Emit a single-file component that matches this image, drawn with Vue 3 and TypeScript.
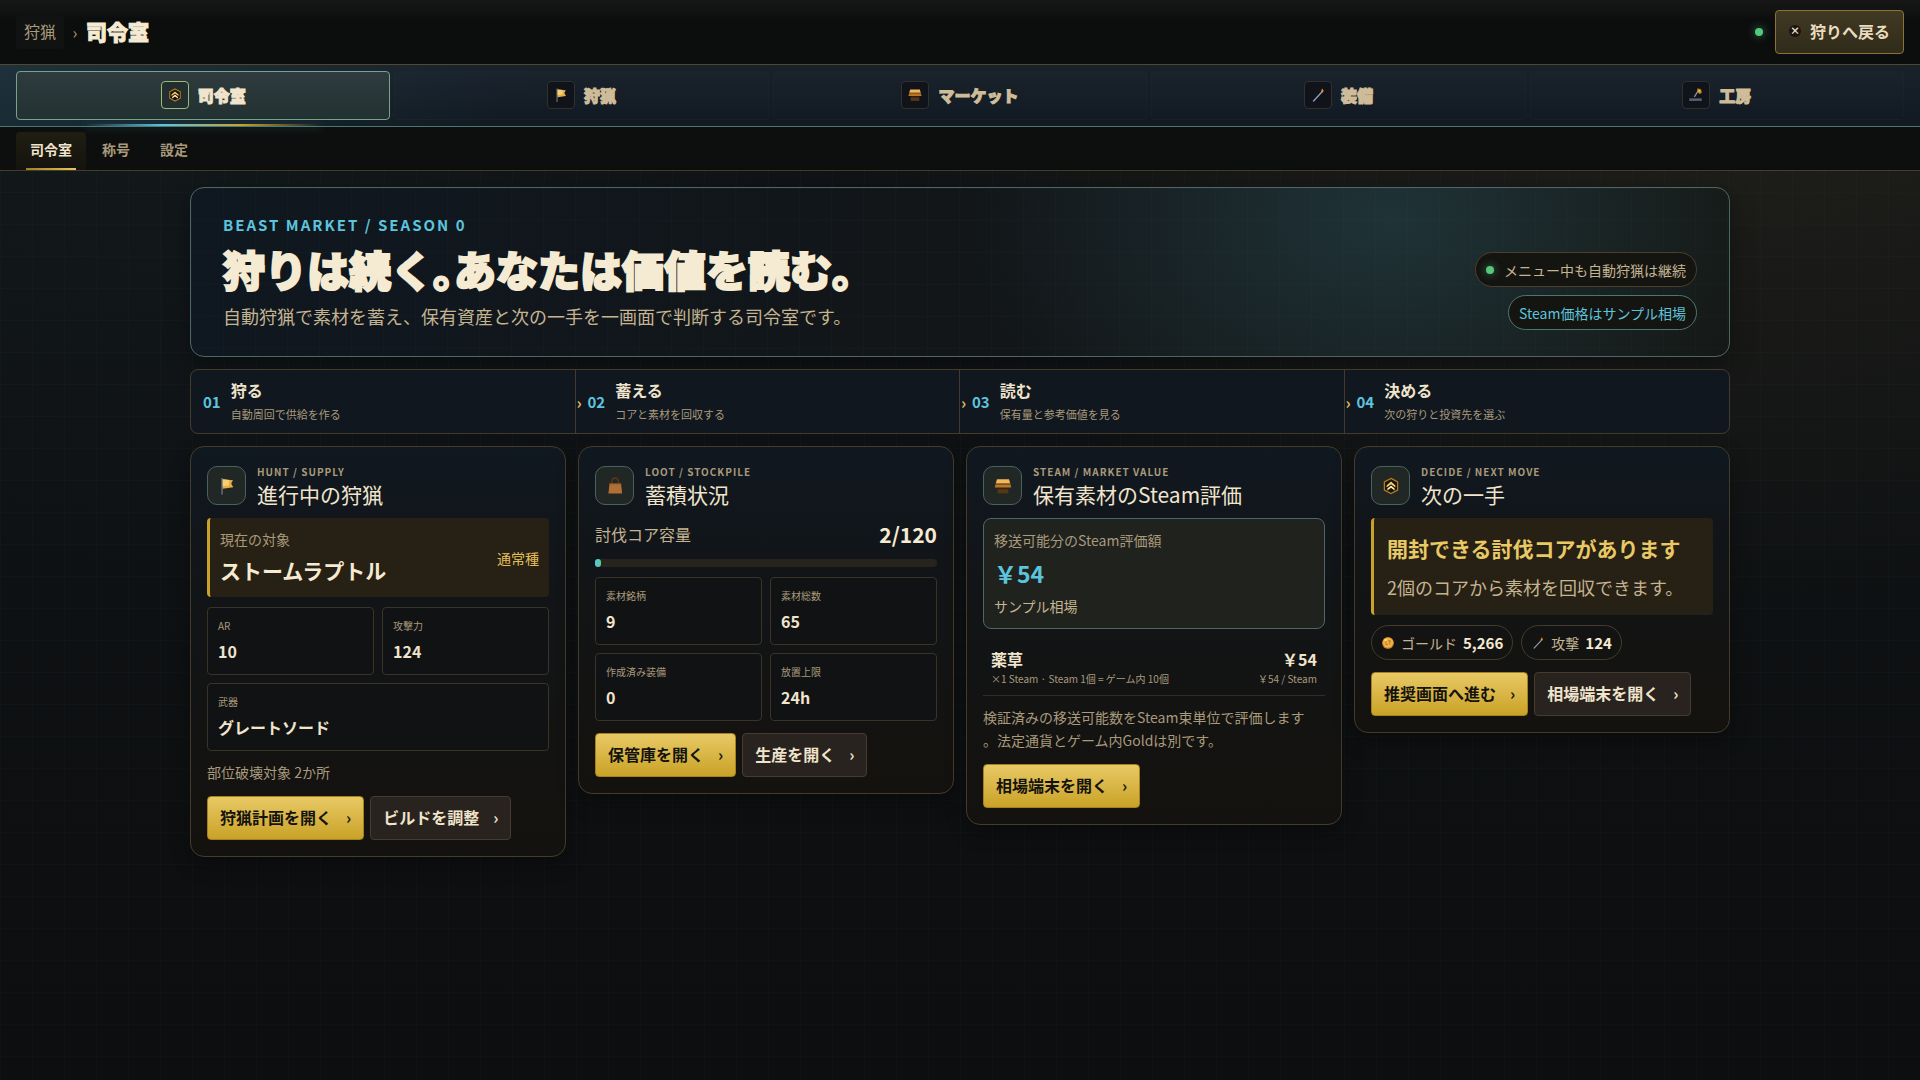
<script setup lang="ts">
import { computed, defineComponent, h, ref } from 'vue'

type IconName = 'emblem' | 'flag' | 'stall' | 'sword' | 'forge' | 'bag' | 'coin'

interface Tab {
  icon: IconName
  label: string
}

interface Stat {
  label: string
  value: string
  wide?: boolean
}

const shapes: Record<IconName, [string, Record<string, string>][]> = {
  emblem: [
    ['path', { d: 'M10 2.4 16.6 6v8L10 17.6 3.4 14V6z', fill: '#17140f', stroke: '#b9781f', 'stroke-width': '1.3' }],
    ['path', { d: 'M10 5.6 14.4 9.4v2L10 8.2l-4.4 3.2v-2z', fill: '#f3d36a' }],
    ['path', { d: 'M10 9.4l3.6 3v2L10 11.8l-3.6 2.6v-2z', fill: '#fff1b0' }],
  ],
  flag: [
    ['path', { d: 'M4.4 2h1.3v16.6H4.4z', fill: '#6f7a8a' }],
    ['path', { d: 'M5.7 3.2 16 4.2l-1.8 3.4 2 3.6-10.5 1.6z', fill: '#e6ad48' }],
    ['path', { d: 'M5.7 3.2 12 3.9v5.3l-6.3 1z', fill: '#f6cf72' }],
  ],
  stall: [
    ['path', { d: 'M4 3.2h12l1.2 4H2.8z', fill: '#f0b95c' }],
    ['path', { d: 'M2.8 7.2h14.4l1 4.2H1.8z', fill: '#b87828' }],
    ['path', { d: 'M2.6 8.4h14.8', stroke: '#6f4218', 'stroke-width': '.8' }],
    ['path', { d: 'M4.6 12.2h10.8v5.2H4.6z', fill: '#573614' }],
    ['path', { d: 'M4.6 12.2h10.8v1H4.6z', fill: '#35200c' }],
  ],
  sword: [
    ['path', { d: 'M4.4 17.4 14.8 6.2', stroke: '#8fa0bd', 'stroke-width': '1.7', 'stroke-linecap': 'round' }],
    ['path', { d: 'M15.2 1.8l2 2.8-1.6 2.6-2-1.6z', fill: '#e48b1c' }],
  ],
  forge: [
    ['path', { d: 'M8 12.4 12.8 4.6', stroke: '#8793a8', 'stroke-width': '1.6' }],
    ['path', { d: 'M12 1.6l4.4 1.6 .8 4-2.6 1.6-3.4-3z', fill: '#c98a1e' }],
    ['path', { d: 'M13.4 3.4l2 1-.6 2-2-1z', fill: '#f5c64c' }],
    ['path', { d: 'M1.6 14.2h15.6v3.2H1.6z', fill: '#566173' }],
  ],
  bag: [
    ['path', { d: 'M7 7.4V5.2a3.2 3.2 0 0 1 6.4 0v2.2', fill: 'none', stroke: '#5d3818', 'stroke-width': '1.4' }],
    ['path', { d: 'M4.6 7h11.4l1.2 10.6H3.4z', fill: '#b06f34' }],
    ['path', { d: 'M4.6 7h11.4l.2 1.2H4.4z', fill: '#7a4a20' }],
  ],
  coin: [
    ['circle', { cx: '10', cy: '10', r: '8.6', fill: '#b9711a' }],
    ['circle', { cx: '10', cy: '9.4', r: '7.4', fill: '#f0b247' }],
    ['path', { d: 'M7 6.6v5.6h3M12.6 6.6v5.6M10 7h4', fill: 'none', stroke: '#a86c1c', 'stroke-width': '1.1' }],
    ['circle', { cx: '6.6', cy: '5.8', r: '1.6', fill: '#ffe39a' }],
  ],
}

const GameIcon = defineComponent({
  props: { name: { type: String as () => IconName, required: true } },
  setup: (props) => () =>
    h('svg', { viewBox: '0 0 20 20', 'aria-hidden': 'true' }, shapes[props.name].map(([tag, attrs]) => h(tag, attrs))),
})

const tabs: Tab[] = [
  { icon: 'emblem', label: '司令室' },
  { icon: 'flag', label: '狩猟' },
  { icon: 'stall', label: 'マーケット' },
  { icon: 'sword', label: '装備' },
  { icon: 'forge', label: '工房' },
]
const activeTab = ref('司令室')

const subTabs = ['司令室', '称号', '設定']
const activeSub = ref('司令室')

const steps = [
  { no: '01', title: '狩る', text: '自動周回で供給を作る' },
  { no: '02', title: '蓄える', text: 'コアと素材を回収する' },
  { no: '03', title: '読む', text: '保有量と参考価値を見る' },
  { no: '04', title: '決める', text: '次の狩りと投資先を選ぶ' },
]

const huntStats: Stat[] = [
  { label: 'AR', value: '10' },
  { label: '攻撃力', value: '124' },
  { label: '武器', value: 'グレートソード', wide: true },
]
const lootStats: Stat[] = [
  { label: '素材銘柄', value: '9' },
  { label: '素材総数', value: '65' },
  { label: '作成済み装備', value: '0' },
  { label: '放置上限', value: '24h' },
]

const cores = ref(2)
const coreCapacity = 120
const coreWidth = computed(() => `${(cores.value / coreCapacity) * 100}%`)
</script>

<template>
  <div class="page">
    <header class="topbar">
      <div class="crumbs">
        <button type="button" class="crumb">狩猟</button>
        <span class="sep">›</span>
        <span class="here">司令室</span>
      </div>
      <div class="top-right">
        <span class="dot"></span>
        <button type="button" class="back"><span class="x">×</span>狩りへ戻る</button>
      </div>
    </header>

    <nav class="tabs">
      <button
        v-for="t in tabs"
        :key="t.label"
        type="button"
        class="tab"
        :class="{ active: t.label === activeTab }"
        @click="activeTab = t.label"
      >
        <span class="tab-icon"><GameIcon :name="t.icon" /></span>{{ t.label }}
      </button>
    </nav>

    <nav class="subtabs">
      <button
        v-for="s in subTabs"
        :key="s"
        type="button"
        class="subtab"
        :class="{ active: s === activeSub }"
        @click="activeSub = s"
      >{{ s }}</button>
    </nav>

    <main class="content">
      <section class="hero">
        <div>
          <p class="hero-eyebrow">BEAST MARKET / SEASON 0</p>
          <h1>狩りは続く。あなたは価値を読む。</h1>
          <p class="hero-text">自動狩猟で素材を蓄え、保有資産と次の一手を一画面で判断する司令室です。</p>
        </div>
        <div class="hero-pills">
          <span class="hero-pill"><i class="dot"></i>メニュー中も自動狩猟は継続</span>
          <span class="hero-pill steam">Steam価格はサンプル相場</span>
        </div>
      </section>

      <ol class="steps">
        <li v-for="s in steps" :key="s.no" class="step">
          <span class="step-no">{{ s.no }}</span>
          <div>
            <strong>{{ s.title }}</strong>
            <small>{{ s.text }}</small>
          </div>
        </li>
      </ol>

      <div class="cards">
        <article class="card">
          <header class="card-head">
            <span class="card-icon"><GameIcon name="flag" /></span>
            <div>
              <p class="eyebrow">HUNT / SUPPLY</p>
              <h2>進行中の狩猟</h2>
            </div>
          </header>
          <div class="target">
            <div>
              <span class="label">現在の対象</span>
              <strong>ストームラプトル</strong>
            </div>
            <span class="kind">通常種</span>
          </div>
          <dl class="stats">
            <div v-for="s in huntStats" :key="s.label" class="stat" :class="{ wide: s.wide }">
              <dt>{{ s.label }}</dt>
              <dd>{{ s.value }}</dd>
            </div>
          </dl>
          <p class="note">部位破壊対象 2か所</p>
          <div class="actions">
            <button type="button" class="btn primary">狩猟計画を開く<span>›</span></button>
            <button type="button" class="btn">ビルドを調整<span>›</span></button>
          </div>
        </article>

        <article class="card">
          <header class="card-head">
            <span class="card-icon"><GameIcon name="bag" /></span>
            <div>
              <p class="eyebrow">LOOT / STOCKPILE</p>
              <h2>蓄積状況</h2>
            </div>
          </header>
          <div class="capacity">
            <div class="capacity-row">
              <span>討伐コア容量</span>
              <strong>{{ cores }}/{{ coreCapacity }}</strong>
            </div>
            <div class="bar" role="progressbar" :aria-valuenow="cores" aria-valuemin="0" :aria-valuemax="coreCapacity">
              <div class="bar-fill" :style="{ width: coreWidth }"></div>
            </div>
          </div>
          <dl class="stats">
            <div v-for="s in lootStats" :key="s.label" class="stat">
              <dt>{{ s.label }}</dt>
              <dd>{{ s.value }}</dd>
            </div>
          </dl>
          <div class="actions">
            <button type="button" class="btn primary">保管庫を開く<span>›</span></button>
            <button type="button" class="btn">生産を開く<span>›</span></button>
          </div>
        </article>

        <article class="card">
          <header class="card-head">
            <span class="card-icon"><GameIcon name="stall" /></span>
            <div>
              <p class="eyebrow">STEAM / MARKET VALUE</p>
              <h2>保有素材のSteam評価</h2>
            </div>
          </header>
          <div class="valuation">
            <span class="label">移送可能分のSteam評価額</span>
            <strong>￥54</strong>
            <span class="source">サンプル相場</span>
          </div>
          <div class="holding">
            <div>
              <strong>薬草</strong>
              <small>×1 Steam · Steam 1個 = ゲーム内 10個</small>
            </div>
            <div class="holding-value">
              <strong>￥54</strong>
              <small>￥54 / Steam</small>
            </div>
          </div>
          <p class="note">検証済みの移送可能数をSteam束単位で評価します<br />。法定通貨とゲーム内Goldは別です。</p>
          <div class="actions">
            <button type="button" class="btn primary">相場端末を開く<span>›</span></button>
          </div>
        </article>

        <article class="card">
          <header class="card-head">
            <span class="card-icon"><GameIcon name="emblem" /></span>
            <div>
              <p class="eyebrow">DECIDE / NEXT MOVE</p>
              <h2>次の一手</h2>
            </div>
          </header>
          <div class="advice">
            <strong>開封できる討伐コアがあります</strong>
            <p>2個のコアから素材を回収できます。</p>
          </div>
          <div class="chips">
            <span class="chip"><GameIcon name="coin" />ゴールド<b>5,266</b></span>
            <span class="chip"><GameIcon name="sword" />攻撃<b>124</b></span>
          </div>
          <div class="actions">
            <button type="button" class="btn primary">推奨画面へ進む<span>›</span></button>
            <button type="button" class="btn">相場端末を開く<span>›</span></button>
          </div>
        </article>
      </div>
    </main>
  </div>
</template>

<style>
body {
  margin: 0;
  background: #0c0e10;
}
</style>

<style scoped>
* {
  box-sizing: border-box;
}

p,
h1,
h2,
dl,
dd,
ol {
  margin: 0;
  padding: 0;
}

button {
  font: inherit;
  cursor: pointer;
}

.page {
  min-height: 100vh;
  color: #f0e4cc;
  font-family: 'Noto Sans CJK JP', sans-serif;
  font-size: 16px;
  line-height: 24px;
  background:
    linear-gradient(90deg, rgba(110, 200, 220, 0.025) 1px, transparent 1px) 0 0 / 32px 32px,
    linear-gradient(rgba(110, 200, 220, 0.02) 1px, transparent 1px) 0 0 / 32px 32px,
    radial-gradient(ellipse 900px 520px at 90% 8%, rgba(212, 175, 85, 0.08), transparent),
    radial-gradient(ellipse 800px 600px at 8% 0%, rgba(70, 150, 170, 0.05), transparent),
    linear-gradient(#111416, #0c0e10);
}

.topbar {
  display: flex;
  align-items: center;
  justify-content: space-between;
  height: 65px;
  padding: 0 16px;
  border-bottom: 1px solid #51472c;
  background: linear-gradient(#171717, #0c0e0e 20px, #0c0d0d);
}

.crumbs,
.top-right {
  display: flex;
  align-items: center;
}

.crumb {
  height: 34px;
  padding: 0 8px 2px;
  border: 0;
  border-radius: 4px;
  background: #111312;
  color: #a99a7c;
}

.sep {
  width: 22px;
  text-align: center;
  color: #a99a7c;
}

.here {
  padding-bottom: 2px;
  font-size: 21px;
  font-weight: 900;
  color: #f5ead2;
  -webkit-text-stroke: 1px currentColor;
}

.top-right {
  gap: 12px;
}

.dot {
  flex: none;
  width: 8px;
  height: 8px;
  border-radius: 50%;
  background: #55c880;
  box-shadow: 0 0 8px rgba(85, 200, 128, 0.6);
}

.back {
  display: flex;
  align-items: center;
  gap: 9px;
  height: 44px;
  padding: 0 13px 2px;
  border: 1px solid #8d7333;
  border-radius: 4px;
  background: linear-gradient(#403923, #302b1a);
  color: #eadcbf;
  font-weight: 700;
}

.x {
  display: grid;
  place-items: center;
  width: 12px;
  height: 12px;
  border-radius: 50%;
  background: #1b1412;
  font-size: 10px;
  font-weight: 900;
  line-height: 12px;
}

.tabs {
  display: grid;
  grid-template-columns: repeat(5, 1fr);
  gap: 4px;
  height: 62px;
  padding: 6px 16px;
  border-bottom: 1px solid #4f7675;
  background:
    linear-gradient(90deg, rgba(60, 140, 150, 0.16), transparent 28%),
    linear-gradient(#19212b, #111922);
}

.tab {
  position: relative;
  display: flex;
  align-items: center;
  justify-content: center;
  gap: 9px;
  padding: 0 0 2px;
  border: 1px solid rgba(255, 255, 255, 0.015);
  border-radius: 4px;
  background: linear-gradient(rgba(255, 255, 255, 0.012), rgba(255, 255, 255, 0.004));
  color: #cfbd9a;
  font-weight: 900;
  -webkit-text-stroke: 1px currentColor;
}

.tab.active {
  border: 1px solid #7aa287;
  background: linear-gradient(#2f3b3e, #223131);
  color: #f0e4cc;
}

.tab.active::after {
  content: '';
  position: absolute;
  right: 18%;
  bottom: -7px;
  left: 18%;
  height: 2px;
  background: linear-gradient(90deg, transparent, #5cc4dc 33%, #c9a227 66%, transparent);
  box-shadow: 0 2px 8px rgba(92, 196, 220, 0.3);
}

.tab-icon {
  display: grid;
  place-items: center;
  width: 28px;
  height: 28px;
  border: 1px solid #30302f;
  border-radius: 4px;
  background: #10141a;
}

.tab.active .tab-icon {
  border-color: #9db878;
  background: #21302f;
}

.tab-icon svg {
  width: 16px;
  height: 16px;
}

.subtabs {
  display: flex;
  align-items: flex-end;
  gap: 2px;
  height: 44px;
  padding: 0 16px;
  border-bottom: 1px solid #453d2c;
  background: #0d0f0e;
}

.subtab {
  position: relative;
  height: 38px;
  padding: 0 14px 4px;
  border: 0;
  border-radius: 4px 4px 0 0;
  background: none;
  color: #a99a7c;
  font-size: 14px;
  font-weight: 700;
}

.subtab.active {
  background: linear-gradient(#201e12, #14130e);
  color: #f0e4cc;
}

.subtab.active::after {
  content: '';
  position: absolute;
  right: 10px;
  bottom: 0;
  left: 10px;
  height: 2px;
  background: linear-gradient(90deg, #a08028, #e8c85a);
}

.content {
  display: grid;
  gap: 12px;
  max-width: 1572px;
  margin: 0 auto;
  padding: 16px;
}

.hero {
  display: flex;
  justify-content: space-between;
  align-items: flex-end;
  padding: 26px 32px;
  border: 1px solid #4c6764;
  border-radius: 14px;
  background:
    linear-gradient(90deg, rgba(110, 200, 220, 0.02) 1px, transparent 1px) 0 0 / 32px 32px,
    linear-gradient(rgba(110, 200, 220, 0.02) 1px, transparent 1px) 0 0 / 32px 32px,
    radial-gradient(ellipse 420px 290px at 78% 18%, rgba(80, 165, 190, 0.2), transparent),
    linear-gradient(100deg, #0f1720, #121619 45%, #141613);
  box-shadow: 0 8px 24px rgba(0, 0, 0, 0.35);
}

.hero-eyebrow {
  color: #5cc4dc;
  font-size: 15px;
  font-weight: 700;
  letter-spacing: 2px;
  line-height: 22px;
}

h1 {
  margin: 6px 0;
  color: #f5ead2;
  font-size: 42px;
  font-weight: 900;
  line-height: 54px;
  font-feature-settings: 'halt';
  -webkit-text-stroke: 2px currentColor;
}

.hero-text {
  color: #c4b491;
  font-size: 18px;
  line-height: 28px;
}

.hero-pills {
  display: grid;
  justify-items: end;
  gap: 8px;
}

.hero-pill {
  display: flex;
  align-items: center;
  gap: 10px;
  height: 35px;
  padding: 0 10px;
  border: 1px solid #4e3f2b;
  border-radius: 18px;
  background: #141411;
  color: #c4b491;
  font-size: 14px;
}

.hero-pill.steam {
  border-color: #4c7574;
  color: #5cc4dc;
}

.steps {
  display: grid;
  grid-template-columns: repeat(4, 1fr);
  border: 1px solid #453b2c;
  border-radius: 8px;
  background: #10171f;
  list-style: none;
}

.step {
  position: relative;
  display: flex;
  align-items: center;
  gap: 10px;
  min-height: 63px;
  padding: 8px 12px;
}

.step:not(:last-child) {
  border-right: 1px solid #453b2c;
}

.step + .step::before {
  content: '›';
  position: absolute;
  left: 1px;
  color: #e2bf58;
  font-weight: 700;
}

.step-no {
  color: #5cc4dc;
  font-size: 15px;
  font-weight: 700;
}

.step strong,
.step small {
  display: block;
}

.step strong {
  line-height: 25px;
}

.step small {
  color: #a99a7c;
  font-size: 11px;
  line-height: 22px;
}

.cards {
  display: grid;
  grid-template-columns: repeat(4, 1fr);
  align-items: start;
  gap: 12px;
}

.card {
  display: grid;
  gap: 10px;
  padding: 16px;
  border: 1px solid #453b2c;
  border-radius: 14px;
  background: linear-gradient(#101820, #121416 42%, #14120e);
  box-shadow: 0 8px 20px rgba(0, 0, 0, 0.3);
}

.card-head {
  display: flex;
  align-items: center;
  gap: 11px;
}

.card-icon {
  display: grid;
  place-items: center;
  width: 39px;
  height: 39px;
  border: 1px solid #48635f;
  border-radius: 10px;
  background: #202725;
}

.card-icon svg {
  width: 20px;
  height: 20px;
}

.eyebrow {
  color: #a99a7c;
  font-size: 10px;
  font-weight: 700;
  letter-spacing: 1px;
  line-height: 17px;
}

h2 {
  color: #f0e4cc;
  font-size: 21px;
  font-weight: 400;
  line-height: 28px;
}

.label {
  display: block;
  color: #a99a7c;
  font-size: 14px;
  line-height: 23px;
}

.target {
  display: flex;
  align-items: center;
  justify-content: space-between;
  padding: 10px;
  border-left: 3px solid #c9a227;
  border-radius: 4px;
  background: #272014;
}

.target strong {
  display: block;
  margin-top: 2px;
  color: #f5ead2;
  font-size: 21px;
  line-height: 34px;
}

.kind {
  color: #e2bf58;
  font-size: 14px;
}

.stats {
  display: grid;
  grid-template-columns: 1fr 1fr;
  gap: 8px;
}

.stat {
  padding: 10px;
  border: 1px solid #3a3328;
  border-radius: 4px;
  background: #101213;
}

.stat.wide {
  grid-column: 1 / -1;
}

.stat dt {
  color: #a99a7c;
  font-size: 10px;
  line-height: 16px;
}

.stat dd {
  margin-top: 4px;
  font-weight: 700;
  line-height: 26px;
}

.note {
  color: #a99a7c;
  font-size: 14px;
  line-height: 23px;
}

.actions {
  display: flex;
  flex-wrap: wrap;
  gap: 6px;
  margin-top: 2px;
}

.btn {
  display: flex;
  align-items: center;
  gap: 14px;
  height: 44px;
  padding: 0 12px 2px;
  border: 1px solid #463c2e;
  border-radius: 4px;
  background: #29231f;
  color: #f0e4cc;
  font-weight: 700;
}

.btn.primary {
  border-color: #a5821f;
  background: linear-gradient(#e8c965, #c9a227);
  color: #14130f;
}

.capacity {
  display: grid;
  gap: 8px;
}

.capacity-row {
  display: flex;
  align-items: center;
  justify-content: space-between;
  color: #c4b491;
  line-height: 33px;
}

.capacity-row strong {
  color: #f5ead2;
  font-size: 21px;
}

.bar {
  height: 8px;
  border-radius: 4px;
  background: #29231d;
}

.bar-fill {
  min-width: 6px;
  height: 8px;
  border-radius: 4px;
  background: linear-gradient(90deg, #5cc4dc, #4fd09a);
}

.valuation {
  display: grid;
  gap: 4px;
  padding: 10px;
  border: 1px solid #4c6764;
  border-radius: 8px;
  background: #20221e;
}

.valuation strong {
  color: #5cc4dc;
  font-size: 23px;
  line-height: 35px;
}

.source {
  color: #c4b491;
  font-size: 14px;
  line-height: 23px;
}

.holding {
  display: flex;
  justify-content: space-between;
  padding: 8px;
  border-bottom: 1px solid #332e25;
}

.holding strong,
.holding small {
  display: block;
}

.holding strong {
  line-height: 24px;
}

.holding small {
  color: #a99a7c;
  font-size: 10px;
  line-height: 16px;
}

.holding-value {
  text-align: right;
}

.advice {
  display: grid;
  gap: 8px;
  padding: 14px 13px;
  border-left: 3px solid #c9a227;
  border-radius: 4px;
  background: #272014;
}

.advice strong {
  color: #e8c965;
  font-size: 21px;
  line-height: 33px;
}

.advice p {
  color: #c4b491;
  font-size: 18px;
  line-height: 28px;
}

.chips {
  display: flex;
  gap: 8px;
}

.chip {
  display: flex;
  align-items: center;
  gap: 6px;
  height: 35px;
  padding: 0 9px;
  border: 1px solid #453b2c;
  border-radius: 18px;
  color: #c4b491;
  font-size: 14px;
}

.chip svg {
  width: 14px;
  height: 14px;
}

.chip b {
  color: #f5ead2;
  font-size: 15px;
}
</style>
